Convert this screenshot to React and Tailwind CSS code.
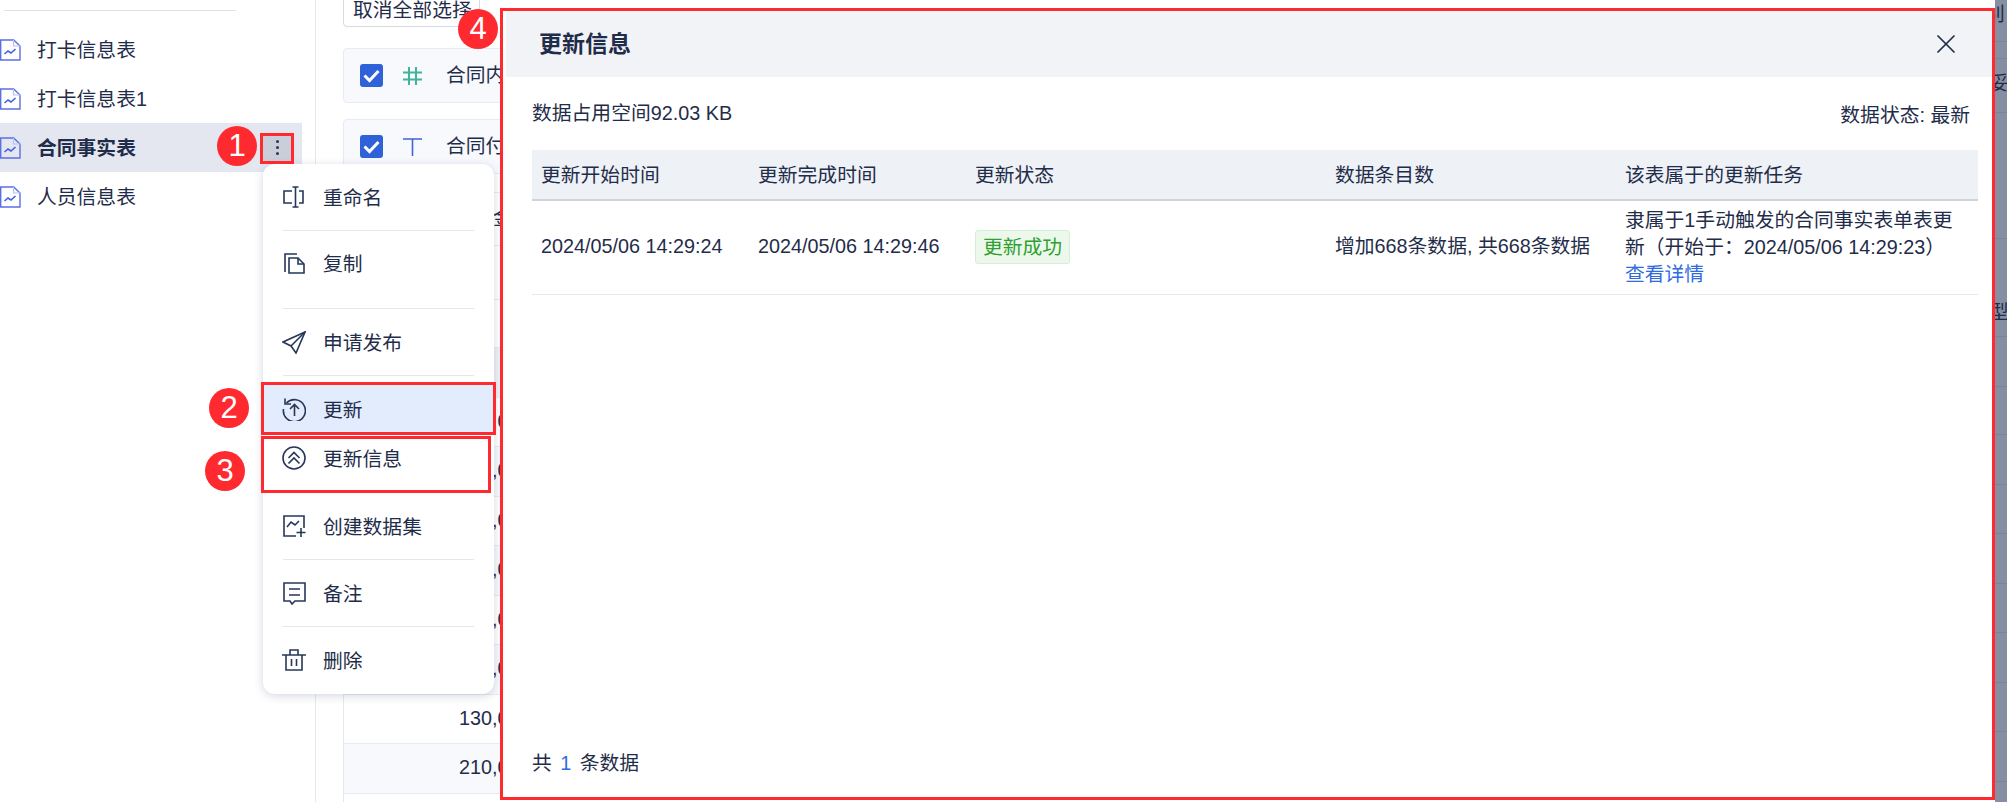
import React from 'react';
import { X } from 'lucide-react';

const FileChartIcon = () => (
  <svg width="21" height="22" viewBox="0 0 21 22" fill="none" className="shrink-0">
    <path d="M.7 1h13L20 7v14H.7z" stroke="#5b6fe6" strokeWidth="1.4" />
    <path d="M13.500 1v6H20" stroke="#b9c3f2" strokeWidth="1.2" />
    <path d="M4.500 15l3.500-3 3 2 4.500-4" stroke="#3f63e0" strokeWidth="1.6" />
  </svg>
);

const icon = { width: 24, height: 24, viewBox: '0 0 24 24', fill: 'none', stroke: '#26375a', strokeWidth: 1.6, className: 'shrink-0' };

const menuIcons = {
  rename: (
    <svg {...icon}>
      <path d="M10 6H2v12h8M17 6h4v12h-4M13.500 2v20M10.500 2h6M10.500 22h6" />
    </svg>
  ),
  copy: (
    <svg {...icon}>
      <path d="M3 21V3h12" />
      <path d="M7 22V7h9l6 6v9z" />
      <path d="M16 7v6h6" />
    </svg>
  ),
  send: (
    <svg {...icon}>
      <path d="M23 2L1 12l8 4 5 7z" />
      <path d="M23 2L9 16" />
    </svg>
  ),
  update: (
    <svg {...icon}>
      <path d="M4.500 6A11 11 0 1 1 1.500 12" />
      <path d="M3 1.500V7h6" />
      <path d="M12.500 19V8M8 12l4.500-4.500 4.500 4.500" />
    </svg>
  ),
  info: (
    <svg {...icon}>
      <circle cx="12" cy="12" r="11" />
      <path d="M6.500 12l5.500-5.500 5.500 5.500M6.500 17.500l5.500-5.500 5.500 5.500" />
    </svg>
  ),
  dataset: (
    <svg {...icon}>
      <path d="M14 22H2V2h20v12" />
      <path d="M5 13l4-5 4 3 4-4" />
      <path d="M19 14v9M14.500 18.500h9" />
    </svg>
  ),
  note: (
    <svg {...icon}>
      <path d="M2 2h21v18H13l-3 3-2-3H2z" />
      <path d="M7 8h11M7 14h11" />
    </svg>
  ),
  trash: (
    <svg {...icon}>
      <path d="M0 7h24M8 7V2h8v5M4 7v15h16V7M9.500 11v7M14.500 11v7" />
    </svg>
  ),
};

const menuRows = [
  { label: '重命名', icon: 'rename', height: 'h-[65px]', align: 'pb-[2px]', divider: true },
  { label: '复制', icon: 'copy', height: 'h-[77px]', align: 'pb-[13px]', divider: true },
  { label: '申请发布', icon: 'send', height: 'h-[66px]', divider: true },
  { label: '更新', icon: 'update', height: 'h-[48px]', active: true, top: 'mt-[9px]' },
  { label: '更新信息', icon: 'info', height: 'h-[59px]', align: 'pb-[9px]' },
  { label: '创建数据集', icon: 'dataset', height: 'h-[67px]', divider: true },
  { label: '备注', icon: 'note', height: 'h-[66px]', divider: true },
  { label: '删除', icon: 'trash', height: 'h-[66px]' },
];

const sideItems = ['打卡信息表', '打卡信息表1', '合同事实表', '人员信息表'];
const amounts = ['120,000', '150,000', '100,000', '180,000', '160,000', '140,000', '130,000', '210,000', ''];

const stripRows = [
  { height: 'h-[42px]', text: '别', offset: '-ml-[10px]' },
  { height: 'h-[17px]' },
  { height: 'h-[54px]', text: '妥', offset: '-ml-[6px] pt-[10px]' },
  { height: 'h-[126px]' },
  { height: 'h-[98px]', text: '型', offset: '-ml-[6px] pt-[59px]' },
  { height: 'h-[50px]' },
  { height: 'h-[48px]' },
  { height: 'h-[50px]' },
  { height: 'h-[49px]' },
  { height: 'h-[50px]' },
  { height: 'h-[49px]' },
  { height: 'h-[50px]' },
  { height: 'h-[49px]' },
  { height: 'h-[50px]' },
];

const Badge = ({ className, children }) => (
  <div className={`absolute flex h-10 w-10 items-center justify-center rounded-full bg-[#ff2a30] text-[31px] text-white ${className}`}>
    {children}
  </div>
);

const Sidebar = () => (
  <aside className="h-[802px] w-[316px] shrink-0 border-r border-[#e6e8f0]">
    <div className="mb-[14px] ml-[4px] mt-[10px] h-px w-[232px] bg-[#dfe2ea]" />
    {sideItems.map((name) => {
      const selected = name === '合同事实表';
      return (
        <div
          key={name}
          className={`flex h-[49px] w-[302px] items-center gap-4 ${selected ? 'bg-[#e4e7ef] font-bold' : ''}`}
        >
          <FileChartIcon />
          <span className="pt-[3px]">{name}</span>
          {selected && (
            <span className="ml-auto mr-[11px] flex h-[28px] w-[28px] flex-col items-center justify-center gap-[3px] rounded-sm bg-[#c9ced9]">
              <i className="h-[3px] w-[3px] rounded-full bg-[#26375a]" />
              <i className="h-[3px] w-[3px] rounded-full bg-[#26375a]" />
              <i className="h-[3px] w-[3px] rounded-full bg-[#26375a]" />
            </span>
          )}
        </div>
      );
    })}
  </aside>
);

const FieldCard = ({ glyph, name }) => (
  <div className="flex h-[55px] w-[400px] items-center rounded border border-[#e8ebf2] bg-[#f7f9fd] pl-[16px]">
    <span className="flex h-[23px] w-[23px] items-center justify-center rounded-[3px] bg-[#2f62d9]">
      <svg width="17" height="14" viewBox="0 0 17 14" fill="none" stroke="#fff" strokeWidth="3">
        <path d="M1.500 6.500l5 5 9-9.500" />
      </svg>
    </span>
    <span className="ml-[20px] w-[43px]">{glyph}</span>
    <span>{name}</span>
  </div>
);

const hashIcon = (
  <svg width="19" height="18" viewBox="0 0 19 18" fill="none" stroke="#3fb39b" strokeWidth="2">
    <path d="M6 0v18M13 0v18M0 5.500h19M0 12.500h19" />
  </svg>
);

const textIcon = (
  <svg width="19" height="18" viewBox="0 0 19 18" fill="none" stroke="#3f63e0" strokeWidth="1.600">
    <path d="M0 1h19M9.500 1v17" />
  </svg>
);

const Content = () => (
  <main className="ml-[27px] flex h-[802px] w-[600px] flex-col overflow-hidden">
    <div className="-mt-[9px] flex h-[36px] w-[137px] shrink-0 items-center whitespace-nowrap rounded border border-[#d5d9e2] pl-[9px] pt-[4px]">
      取消全部选择
    </div>
    <div className="mt-[21px] flex flex-col gap-[16px]">
      <FieldCard glyph={hashIcon} name="合同内容" />
      <FieldCard glyph={textIcon} name="合同付款" />
    </div>
    <div className="mt-[18px] flex h-[54px] shrink-0 items-center border-y border-[#e8ebf2] pl-[150px]">金额</div>
    <div className="h-[54px] shrink-0 border-b border-[#e8ebf2]" />
    <div className="h-[48px] shrink-0 border-b border-[#e8ebf2]" />
    <div className="border-l border-[#e6e8f0]">
      <div className="h-[49.500px] border-b border-[#e8ebf2] bg-[#eef1f6]" />
      {amounts.map((value, i) => (
        <div
          key={i}
          className={`flex h-[49.500px] items-center border-b border-[#e8ebf2] pl-[115px] ${i % 2 === 0 ? '' : 'bg-[#f7f9fd]'}`}
        >
          {value}
        </div>
      ))}
    </div>
  </main>
);

const ContextMenu = () => (
  <div className="absolute left-[263px] top-[164px] w-[231px] rounded-xl bg-white py-[1px] shadow-[0_2px_10px_rgba(60,75,110,0.22)]">
    {menuRows.map((row) => (
      <div key={row.label} className={row.top}>
        <div className={`flex items-center gap-[17px] pl-[19px] ${row.height} ${row.align || ''} ${row.active ? 'bg-[#e2ecfd]' : ''}`}>
          {menuIcons[row.icon]}
          <span className="pt-[4px]">{row.label}</span>
        </div>
        {row.divider && <div className="mx-[20px] h-px bg-[#e4e6ee]" />}
      </div>
    ))}
  </div>
);

const tableColumns = 'grid grid-cols-[217px_217px_360px_290px_1fr]';

const UpdateModal = () => (
  <div className="absolute left-[500px] top-[8px] flex h-[792px] w-[1495px] flex-col border-[3px] border-[#ff2a30] bg-white">
    <div className="ml-[3px] flex h-[66px] shrink-0 items-center justify-between bg-[#f1f3f7] pl-[33px] pr-[30px]">
      <span className="text-[23px] font-bold">更新信息</span>
      <X size={32} strokeWidth={1.3} />
    </div>
    <div className="flex min-h-0 flex-1 flex-col pl-[29px] pr-[14px]">
      <div className="flex justify-between pr-[8px] pt-[22px]">
        <span>数据占用空间92.03 KB</span>
        <span className="pt-[2px]">数据状态: 最新</span>
      </div>
      <div className={`${tableColumns} mt-[19px] h-[51px] items-center border-b-2 border-[#cfd3dc] bg-[#eef1f6] pl-[9px] pt-[3px]`}>
        <span>更新开始时间</span>
        <span>更新完成时间</span>
        <span>更新状态</span>
        <span>数据条目数</span>
        <span>该表属于的更新任务</span>
      </div>
      <div className={`${tableColumns} h-[94px] items-center border-b border-[#e6e8f0] pl-[9px]`}>
        <span>2024/05/06 14:29:24</span>
        <span>2024/05/06 14:29:46</span>
        <span>
          <span className="inline-block h-[34px] w-[95px] rounded-[3px] border border-[#d5efd5] bg-[#edf8ed] text-center leading-[32px] text-[#2ea12e]">
            更新成功
          </span>
        </span>
        <span>增加668条数据, 共668条数据</span>
        <div className="pr-[12px] leading-[27px]">
          隶属于1手动触发的合同事实表单表更新（开始于：2024/05/06 14:29:23）
          <div className="text-[#2f6ae0]">查看详情</div>
        </div>
      </div>
      <div className="mt-auto pb-[18px]">
        共 <span className="mx-[3px] text-[#2f6ae0]">1</span> 条数据
      </div>
    </div>
  </div>
);

// the part of the page behind the dialog that still shows on the right edge
const RightStrip = () => (
  <div className="absolute left-[1995px] top-0 h-[802px] w-[12px] overflow-hidden bg-[#868ea2] text-[#1f2d4a]">
    {stripRows.map((row, i) => (
      <div key={i} className={`whitespace-nowrap border-b border-[#7b8398] ${row.height} ${row.offset || ''}`}>
        {row.text}
      </div>
    ))}
  </div>
);

const Marks = () => (
  <>
    <div className="absolute left-[260px] top-[133px] h-[31px] w-[34px] border-[3px] border-[#ff2a30]" />
    <div className="absolute left-[261px] top-[382px] h-[53px] w-[235px] border-[3px] border-[#ff2a30]" />
    <div className="absolute left-[261px] top-[436px] h-[57px] w-[230px] border-[3px] border-[#ff2a30]" />
    <Badge className="left-[217px] top-[126px]">1</Badge>
    <Badge className="left-[209px] top-[388px]">2</Badge>
    <Badge className="left-[205px] top-[451px]">3</Badge>
    <Badge className="left-[458px] top-[9px]">4</Badge>
  </>
);

const App = () => (
  <div className="relative flex h-[802px] w-[2007px] overflow-hidden bg-white font-['Liberation_Sans','Noto_Sans_CJK_SC',sans-serif] text-[19.800px] text-[#1f2d4a]">
    <Sidebar />
    <Content />
    <ContextMenu />
    <RightStrip />
    <UpdateModal />
    <Marks />
  </div>
);

export default App;
